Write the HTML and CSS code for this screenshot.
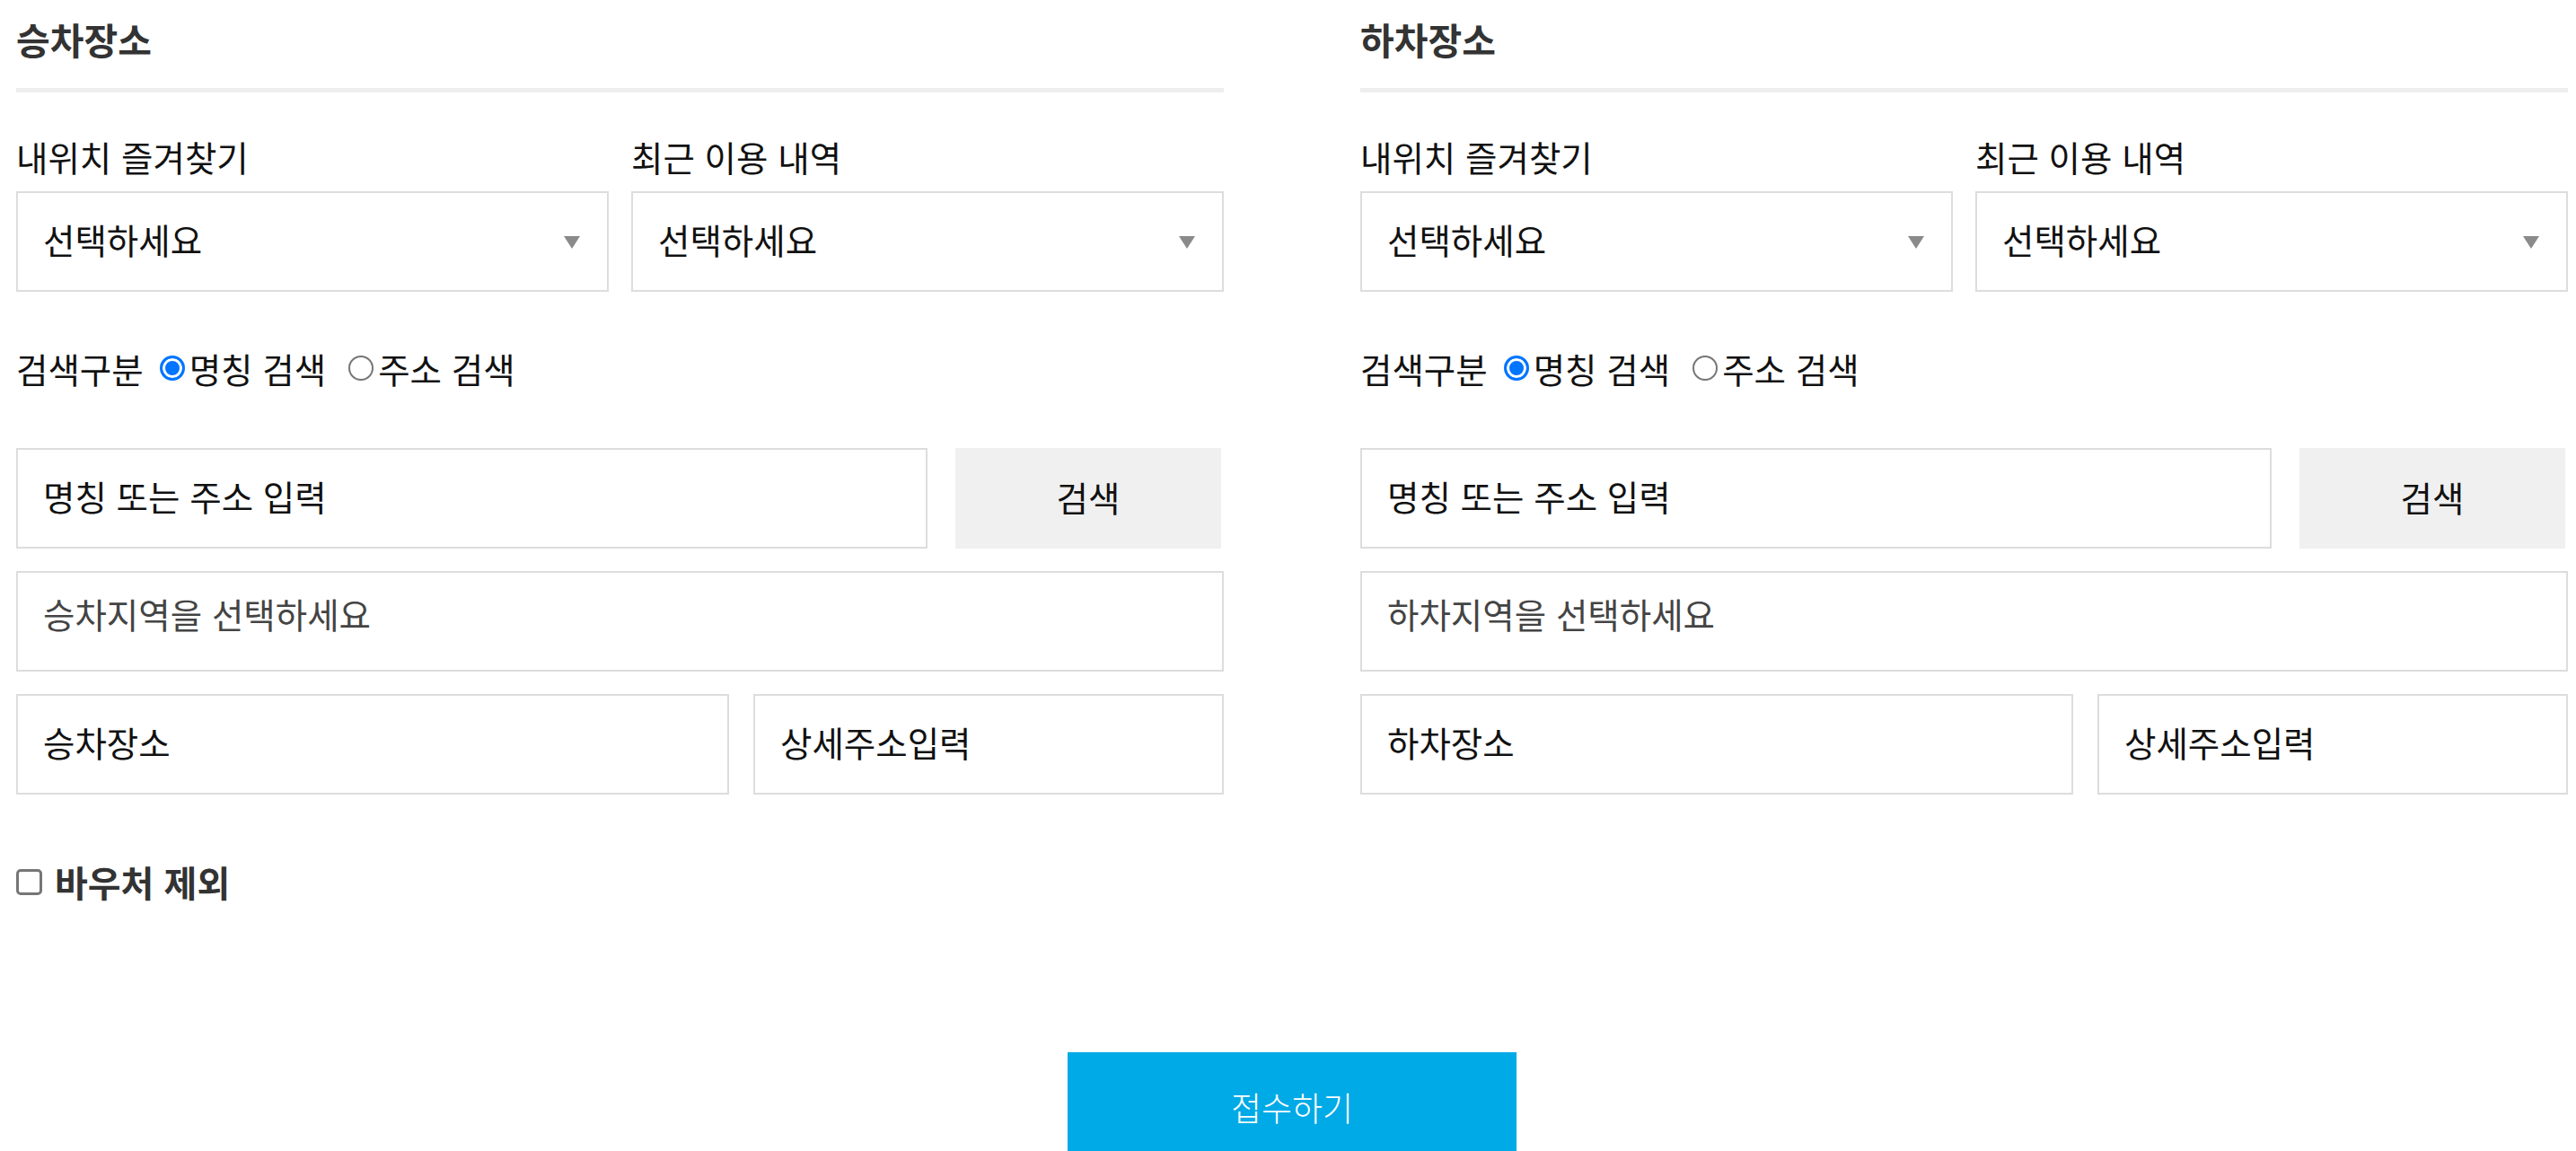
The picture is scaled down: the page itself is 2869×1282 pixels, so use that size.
FILE: index.html
```html
<!DOCTYPE html>
<html lang="ko">
<head>
    <meta charset="UTF-8">
    <meta name="viewport" content="width=device-width, initial-scale=1.0">
    <title>승하차 장소</title>
    <link rel="stylesheet" href="styles.css">
</head>
<body>
    <div class="wrapper">
        <div class="places">
            <div class="place">
                <h2>승차장소</h2>
                <div class="pick">
                    <div class="field">
                        <label>내위치 즐겨찾기</label>
                        <div class="selectBox">
                            <select>
                                <option>선택하세요</option>
                            </select>
                        </div>
                    </div>
                    <div class="field">
                        <label>최근 이용 내역</label>
                        <div class="selectBox">
                            <select>
                                <option>선택하세요</option>
                            </select>
                        </div>
                    </div>
                </div>
                <div class="searchType">
                    <span>검색구분</span>
                    <label class="radio"><input type="radio" name="type1" checked>명칭 검색</label>
                    <label class="radio"><input type="radio" name="type1">주소 검색</label>
                </div>
                <div class="searchRow">
                    <input class="inp" type="text" placeholder="명칭 또는 주소 입력">
                    <button class="searchBtn">검색</button>
                </div>
                <div class="area">승차지역을 선택하세요</div>
                <div class="detailRow">
                    <input class="inp" type="text" placeholder="승차장소">
                    <input class="inp" type="text" placeholder="상세주소입력">
                </div>
                <label class="voucher"><input type="checkbox">바우처 제외</label>
            </div>
            <div class="place">
                <h2>하차장소</h2>
                <div class="pick">
                    <div class="field">
                        <label>내위치 즐겨찾기</label>
                        <div class="selectBox">
                            <select>
                                <option>선택하세요</option>
                            </select>
                        </div>
                    </div>
                    <div class="field">
                        <label>최근 이용 내역</label>
                        <div class="selectBox">
                            <select>
                                <option>선택하세요</option>
                            </select>
                        </div>
                    </div>
                </div>
                <div class="searchType">
                    <span>검색구분</span>
                    <label class="radio"><input type="radio" name="type2" checked>명칭 검색</label>
                    <label class="radio"><input type="radio" name="type2">주소 검색</label>
                </div>
                <div class="searchRow">
                    <input class="inp" type="text" placeholder="명칭 또는 주소 입력">
                    <button class="searchBtn">검색</button>
                </div>
                <div class="area">하차지역을 선택하세요</div>
                <div class="detailRow">
                    <input class="inp" type="text" placeholder="하차장소">
                    <input class="inp" type="text" placeholder="상세주소입력">
                </div>
            </div>
        </div>
        <button class="submitBtn">접수하기</button>
    </div>
</body>
</html>
```

FILE: styles.css
```css
html,
body {
    margin: 0;
    padding: 0;
}
body {
    font-family: "Noto Sans CJK KR", "Noto Sans", sans-serif;
    color: #111;
    background-color: #fff;
    overflow: hidden;
}
.wrapper {
    width: 2842px;
    padding-left: 18px;
}
.places {
    display: grid;
    grid-template-columns: 1345px 1345px;
    column-gap: 152px;
}
h2 {
    margin: 0;
    padding: 15px 0 27px;
    font-size: 41px;
    line-height: 56px;
    font-weight: bold;
    color: #333;
    border-bottom: 5px solid #eee;
}
.pick {
    display: grid;
    grid-template-columns: 660px 660px;
    column-gap: 25px;
    margin-top: 46px;
}
.field label {
    display: block;
    font-size: 38.5px;
    line-height: 50px;
    margin-bottom: 14px;
}
.selectBox {
    position: relative;
}
.selectBox select {
    display: block;
    width: 100%;
    height: 112px;
    box-sizing: border-box;
    border: 2px solid #ddd;
    border-radius: 0;
    padding: 0 28px 6px;
    font-family: inherit;
    font-size: 38.5px;
    color: #111;
    background-color: #fff;
    appearance: none;
    -webkit-appearance: none;
    outline: none;
}
.selectBox::after {
    content: "";
    position: absolute;
    right: 32px;
    top: 50%;
    margin-top: -6px;
    border-left: 9px solid transparent;
    border-right: 9px solid transparent;
    border-top: 14px solid #8a8a8a;
    pointer-events: none;
}
.searchType {
    display: flex;
    align-items: center;
    margin-top: 60px;
    height: 50px;
    font-size: 38.5px;
}
.radio {
    display: flex;
    align-items: center;
}
.radio input {
    flex: none;
    appearance: none;
    -webkit-appearance: none;
    width: 28px;
    height: 28px;
    box-sizing: border-box;
    border: 2px solid #767676;
    border-radius: 50%;
    background-color: #fff;
    margin: 0 5px 0 18px;
}
.radio input:checked {
    border: 3px solid #0075ff;
    background-color: #0075ff;
    box-shadow: inset 0 0 0 3px #fff;
}
.radio + .radio input {
    margin-left: 25px;
}
.searchRow {
    display: grid;
    grid-template-columns: 1015px 296px;
    column-gap: 31px;
    margin-top: 64px;
}
.inp {
    display: block;
    width: 100%;
    height: 112px;
    box-sizing: border-box;
    border: 2px solid #ddd;
    padding: 0 28px 6px;
    font-family: inherit;
    font-size: 38.5px;
    color: #111;
    outline: none;
}
.inp::placeholder {
    color: #111;
    opacity: 1;
}
.searchBtn {
    height: 112px;
    border: none;
    padding-bottom: 6px;
    background-color: #f0f0f0;
    font-family: inherit;
    font-size: 38.5px;
    color: #111;
    cursor: pointer;
}
.area {
    margin-top: 25px;
    height: 112px;
    box-sizing: border-box;
    border: 2px solid #ddd;
    padding: 20px 28px 0;
    font-size: 38.5px;
    line-height: 50px;
    color: #444;
}
.detailRow {
    display: grid;
    grid-template-columns: 794px 1fr;
    column-gap: 27px;
    margin-top: 25px;
}
.voucher {
    display: flex;
    align-items: center;
    margin-top: 72px;
    height: 50px;
    font-size: 40px;
    font-weight: bold;
    color: #333;
}
.voucher input {
    flex: none;
    appearance: none;
    -webkit-appearance: none;
    width: 29px;
    height: 29px;
    box-sizing: border-box;
    border: 3px solid #767676;
    border-radius: 5px;
    background-color: #fff;
    margin: 0 14px 0 0;
}
.submitBtn {
    display: block;
    width: 500px;
    height: 122px;
    margin: 165px auto 0;
    border: none;
    background-color: #00aae6;
    color: #fff;
    font-family: inherit;
    font-size: 37px;
    font-weight: 300;
    cursor: pointer;
}
```
